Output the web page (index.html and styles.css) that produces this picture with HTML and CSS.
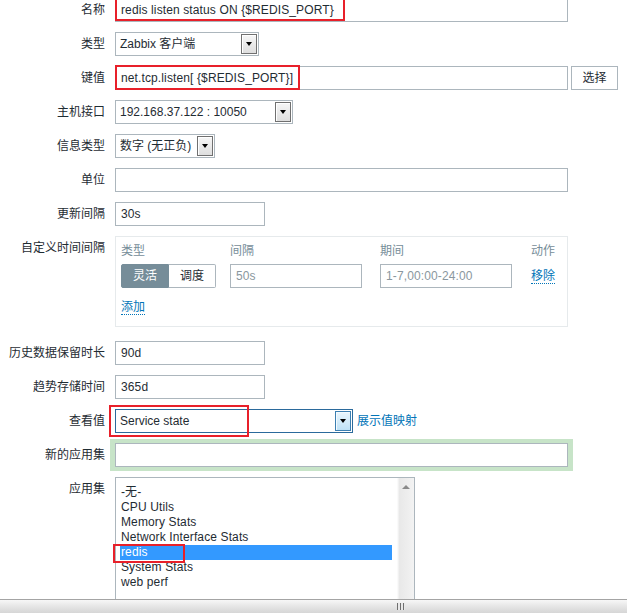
FILE: index.html
```html
<!DOCTYPE html>
<html lang="zh-CN">
<head>
<meta charset="utf-8">
<title>监控项</title>
<link rel="stylesheet" href="styles.css">
</head>
<body>
<div class="page">
  <div class="viewport">
    <div class="form">
      <div class="lbl">名称</div>
      <div class="field">
        <div class="input w-453">redis listen status ON {$REDIS_PORT}</div>
        <span class="mark mark-name"></span>
      </div>

      <div class="lbl">类型</div>
      <div class="field">
        <div class="select w-144"><span class="sel-text">Zabbix 客户端</span><span class="sel-btn"></span></div>
      </div>

      <div class="lbl">键值</div>
      <div class="field row">
        <div class="input w-453">net.tcp.listen[ {$REDIS_PORT}]</div>
        <div class="btn">选择</div>
        <span class="mark mark-key"></span>
      </div>

      <div class="lbl">主机接口</div>
      <div class="field">
        <div class="select w-178"><span class="sel-text">192.168.37.122 : 10050</span><span class="sel-btn"></span></div>
      </div>

      <div class="lbl">信息类型</div>
      <div class="field">
        <div class="select w-100"><span class="sel-text">数字 (无正负)</span><span class="sel-btn"></span></div>
      </div>

      <div class="lbl">单位</div>
      <div class="field">
        <div class="input w-453"></div>
      </div>

      <div class="lbl">更新间隔</div>
      <div class="field">
        <div class="input w-150">30s</div>
      </div>

      <div class="lbl">自定义时间间隔</div>
      <div class="field">
        <div class="custom">
          <div class="ci-grid">
            <div class="ci-head">类型</div>
            <div class="ci-head">间隔</div>
            <div class="ci-head">期间</div>
            <div class="ci-head">动作</div>
            <div class="seg">
              <span class="seg-on">灵活</span><span class="seg-off">调度</span>
            </div>
            <div class="input ci-input">50s</div>
            <div class="input ci-input">1-7,00:00-24:00</div>
            <div class="ci-action"><span class="link">移除</span></div>
          </div>
          <div class="ci-add"><span class="link">添加</span></div>
        </div>
      </div>

      <div class="lbl">历史数据保留时长</div>
      <div class="field">
        <div class="input w-150">90d</div>
      </div>

      <div class="lbl">趋势存储时间</div>
      <div class="field">
        <div class="input w-150">365d</div>
      </div>

      <div class="lbl">查看值</div>
      <div class="field row">
        <div class="select select-focus w-238"><span class="sel-text">Service state</span><span class="sel-btn sel-btn-blue"></span></div>
        <span class="plain-link">展示值映射</span>
        <span class="mark mark-view"></span>
      </div>

      <div class="lbl">新的应用集</div>
      <div class="field">
        <div class="input w-453 input-green"></div>
      </div>

      <div class="lbl">应用集</div>
      <div class="field">
        <div class="listbox">
          <div class="list-items">
            <div class="opt">-无-</div>
            <div class="opt">CPU Utils</div>
            <div class="opt">Memory Stats</div>
            <div class="opt">Network Interface Stats</div>
            <div class="opt opt-sel">redis</div>
            <div class="opt">System Stats</div>
            <div class="opt">web perf</div>
          </div>
          <div class="vscroll"><span class="vs-up"></span></div>
          <span class="mark mark-redis"></span>
        </div>
      </div>
    </div>
  </div>
  <div class="hscroll"><span class="grip"></span></div>
</div>
</body>
</html>
```

FILE: styles.css
```css
html, body {
  margin: 0;
  padding: 0;
  background: #fff;
}

body {
  font-family: "Liberation Sans", Arial, "Noto Sans CJK SC", sans-serif;
  font-size: 12px;
  color: #1f2c33;
}

.page {
  height: 613px;
  display: flex;
  flex-direction: column;
  overflow: hidden;
}

.viewport {
  flex: 1;
  min-height: 0;
  overflow: hidden;
}

.form {
  display: grid;
  grid-template-columns: 105px 1fr;
  column-gap: 10px;
  row-gap: 10px;
  margin-top: -2px;
}

.lbl {
  text-align: right;
  line-height: 14px;
  padding-top: 5px;
  white-space: nowrap;
}

.field {
  position: relative;
}

.row {
  display: flex;
  align-items: flex-start;
}

.input {
  box-sizing: border-box;
  height: 24px;
  border: 1px solid #acb6bd;
  background: #fff;
  padding: 0 5px;
  line-height: 22px;
  white-space: nowrap;
  overflow: hidden;
  letter-spacing: 0.12px;
}

.w-453 { width: 453px; }
.w-150 { width: 150px; }
.w-144 { width: 144px; }
.w-178 { width: 178px; }
.w-100 { width: 100px; }
.w-238 { width: 238px; }

.input-green {
  box-shadow: -1px 0 0 4px #c7e4c8, 1px 0 0 4px #c7e4c8;
}

.btn {
  box-sizing: border-box;
  width: 47px;
  height: 24px;
  margin-left: 3px;
  border: 1px solid #acb6bd;
  background: #fff;
  line-height: 22px;
  text-align: center;
}

/* select */
.select {
  box-sizing: border-box;
  height: 24px;
  border: 1px solid #acb6bd;
  background: #fff;
  display: flex;
  align-items: stretch;
}

.sel-text {
  flex: 1;
  padding-left: 4px;
  line-height: 22px;
  white-space: nowrap;
  overflow: hidden;
}

.sel-btn {
  box-sizing: border-box;
  width: 16px;
  margin: 1px 1px 1px 0;
  border: 1px solid #707070;
  background: linear-gradient(#f6f6f6, #dedede);
  box-shadow: inset 1px 1px 0 #fff;
  display: flex;
  align-items: center;
  justify-content: center;
}

.sel-btn::after {
  content: "";
  width: 0;
  height: 0;
  border-top: 4px solid #000;
  border-left: 3.5px solid transparent;
  border-right: 3.5px solid transparent;
}

.select-focus {
  border-color: #2b6a9c;
}

.sel-btn-blue {
  border-color: #3c7fb1;
  background: linear-gradient(#eaf6fd, #bfe2f7);
  box-shadow: inset 1px 1px 0 #f4fbff;
}

.plain-link {
  margin-left: 4px;
  line-height: 24px;
  color: #0275b8;
  white-space: nowrap;
}

/* custom intervals */
.custom {
  box-sizing: border-box;
  width: 453px;
  height: 91px;
  margin-bottom: 4px;
  border: 1px solid #e6eaec;
  padding: 7px 0 0 5px;
}

.ci-grid {
  display: grid;
  grid-template-columns: 109px 150px 151px auto;
  row-gap: 6px;
}

.ci-head {
  color: #768d99;
  line-height: 14px;
}

.seg {
  display: flex;
  width: 95px;
  height: 24px;
}

.seg-on,
.seg-off {
  box-sizing: border-box;
  height: 24px;
  line-height: 22px;
  text-align: center;
}

.seg-on {
  width: 48px;
  background: #768d99;
  border: 1px solid #768d99;
  border-radius: 2px 0 0 2px;
  color: #fff;
}

.seg-off {
  width: 47px;
  border: 1px solid #acb6bd;
  border-left: none;
  border-radius: 0 2px 2px 0;
  background: #fff;
}

.ci-input {
  width: 132px;
  color: #8a979e;
}

.ci-action {
  padding-top: 5px;
  line-height: 14px;
}

.ci-add {
  margin-top: 12px;
  line-height: 14px;
}

.link {
  color: #0275b8;
  border-bottom: 1px dotted #0275b8;
  display: inline-block;
  line-height: 14px;
}

/* listbox */
.listbox {
  position: relative;
  box-sizing: border-box;
  width: 300px;
  height: 140px;
  border: 1px solid #acb6bd;
  border-bottom: none;
  display: flex;
}

.list-items {
  flex: 1;
  padding: 7px 5px 0 4px;
}

.opt {
  height: 15px;
  line-height: 15px;
  padding-left: 1px;
  white-space: nowrap;
  color: #1f2c33;
  letter-spacing: 0.12px;
}

.opt-sel {
  background: #3399ff;
  color: #fff;
}

.vscroll {
  width: 17px;
  background: linear-gradient(90deg, #fafafa 0, #fafafa 1px, #e8e8e8 2px, #efefef 12px, #f3f3f3 17px);
  display: flex;
  justify-content: center;
  padding-top: 7px;
  box-sizing: border-box;
}

.vs-up {
  width: 0;
  height: 0;
  border-bottom: 4px solid #8a8a8a;
  border-left: 4px solid transparent;
  border-right: 4px solid transparent;
}

/* annotations */
.mark {
  position: absolute;
  box-sizing: border-box;
  border: 2px solid #e8202a;
  pointer-events: none;
}

.mark-name {
  left: 0;
  top: -6px;
  width: 230px;
  height: 29px;
}

.mark-key {
  left: 0;
  top: -1px;
  width: 185px;
  height: 25px;
}

.mark-view {
  left: -6px;
  top: -4px;
  width: 140px;
  height: 32px;
}

.mark-redis {
  left: -3px;
  top: 66px;
  width: 72px;
  height: 19px;
}

/* bottom scrollbar */
.hscroll {
  flex: none;
  box-sizing: border-box;
  height: 14px;
  border-top: 1px solid #a4a4a4;
  background: linear-gradient(#f7f7f7, #e2e2e2 60%, #d6d6d6);
  display: flex;
  align-items: center;
}

.grip {
  margin-left: 397px;
  width: 8px;
  height: 7px;
  background: repeating-linear-gradient(90deg, #6f6f6f 0, #6f6f6f 1px, #e8e8e8 1px, #e8e8e8 3px);
}
```
